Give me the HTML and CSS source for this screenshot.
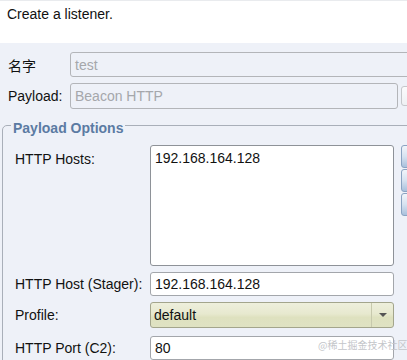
FILE: index.html
```html
<!DOCTYPE html>
<html lang="zh">
<head>
  <meta charset="UTF-8">
  <meta name="viewport" content="width=device-width, initial-scale=1">
  <title>New Listener</title>
  <link rel="stylesheet" href="styles.css">
</head>

<body>
  <div class="dialog">
    <div class="header">Create a listener.</div>

    <div class="form">
      <div class="row">
        <label class="row-label cjk">名字</label>
        <div class="field disabled wide">test</div>
      </div>

      <div class="row row-payload">
        <label class="row-label">Payload:</label>
        <div class="field disabled payload">Beacon HTTP</div>
        <button class="more-btn"></button>
      </div>

      <div class="group">
        <div class="group-title">Payload Options</div>
        <div class="options">
          <label class="opt-label top">HTTP Hosts:</label>
          <div class="field hosts">192.168.164.128</div>
          <div class="side-btns">
            <button class="blue-btn"></button>
            <button class="blue-btn"></button>
            <button class="blue-btn"></button>
          </div>

          <label class="opt-label">HTTP Host (Stager):</label>
          <div class="field">192.168.164.128</div>
          <div></div>

          <label class="opt-label">Profile:</label>
          <div class="combo">
            <span class="combo-text">default</span>
            <span class="combo-arrow"></span>
          </div>
          <div></div>

          <label class="opt-label port">HTTP Port (C2):</label>
          <div class="field port">80</div>
          <div></div>
        </div>
      </div>
    </div>

    <div class="watermark">@稀土掘金技术社区</div>
  </div>
</body>
</html>
```

FILE: styles.css
```css
* {
  box-sizing: border-box;
}

html, body {
  margin: 0;
  height: 100%;
  overflow: hidden;
}

body {
  background: #eef1f8;
  font-family: "Liberation Sans", Arial, "Noto Sans CJK SC", sans-serif;
  font-size: 14px;
  line-height: 16px;
  color: #111;
}

.dialog {
  position: relative;
  width: 440px;
  height: 100%;
}

.header {
  height: 43px;
  background: #fff;
  padding: 5px 7px 0;
  border-top: 1px solid #e9ebee;
}

.form {
  display: flex;
  flex-direction: column;
  gap: 6px;
  padding-top: 9px;
}

.row {
  display: flex;
  align-items: center;
  height: 25px;
}

.row-payload {
  height: 26px;
}

.row-label {
  width: 70px;
  padding-left: 8px;
  flex: none;
}

.cjk {
  font-family: "Noto Sans CJK SC", sans-serif;
}

.field {
  height: 24px;
  background: #fff;
  border: 1px solid #a3a6ab;
  border-radius: 3px;
  padding: 0 4px;
  display: flex;
  align-items: center;
  white-space: nowrap;
}

.field.disabled {
  background: #eef1f8;
  color: #a5a7ab;
  height: 100%;
  border-color: #b3b5b9;
}

.field.wide {
  flex: 1;
}

.field.payload {
  width: 328px;
  flex: none;
}

.more-btn {
  margin-left: 3px;
  width: 26px;
  height: 20px;
  border: 1px solid #c5c7cb;
  border-radius: 3px;
  background: linear-gradient(#fbfbfc, #eef0f3);
  padding: 0;
}

/* titled border box */
.group {
  margin: 10px 0 0 2px;
  border: 1px solid #a9afb9;
  border-radius: 5px;
  height: 240px;
}

.group-title {
  width: fit-content;
  margin: -6px 0 0 8px;
  padding: 0 2px;
  background: #eef1f8;
  font-weight: bold;
  color: #5b7ba3;
}

.options {
  display: grid;
  grid-template-columns: 128px 244px 30px;
  column-gap: 7px;
  row-gap: 6px;
  margin-top: 9px;
  padding-left: 12px;
}

.opt-label {
  align-self: center;
  white-space: nowrap;
}

.opt-label.top {
  align-self: start;
  padding-top: 6px;
}

.field.hosts {
  height: 121px;
  align-items: flex-start;
  padding-top: 4px;
  border-color: #8e9298;
}

.field.port,
.opt-label.port {
  margin-top: 2px;
}

.side-btns {
  display: flex;
  flex-direction: column;
  gap: 1px;
}

.blue-btn {
  height: 23px;
  width: 26px;
  padding: 0;
  border: 1px solid #8aa3c2;
  border-radius: 3px;
  background: linear-gradient(#f1f5fa, #d6e2f0 50%, #a9c0dc);
}

.combo {
  height: 26px;
  display: flex;
  border: 1px solid #a3a58c;
  border-radius: 3px;
  background: linear-gradient(#eeefdc, #e7e9cf 45%, #dee1bf 60%, #dfe2c3);
}

.combo-text {
  flex: 1;
  padding: 0 3px;
  display: flex;
  align-items: center;
}

.combo-arrow {
  width: 22px;
  border-left: 1px solid #c7c9ad;
  display: flex;
  align-items: center;
  justify-content: center;
}

.combo-arrow::after {
  content: "";
  border-left: 4px solid transparent;
  border-right: 4px solid transparent;
  border-top: 4px solid #555;
}

.watermark {
  position: absolute;
  left: 318px;
  top: 338px;
  font-family: "Noto Sans CJK SC", sans-serif;
  font-size: 10px;
  line-height: 14px;
  color: #c4c6ca;
}
```
